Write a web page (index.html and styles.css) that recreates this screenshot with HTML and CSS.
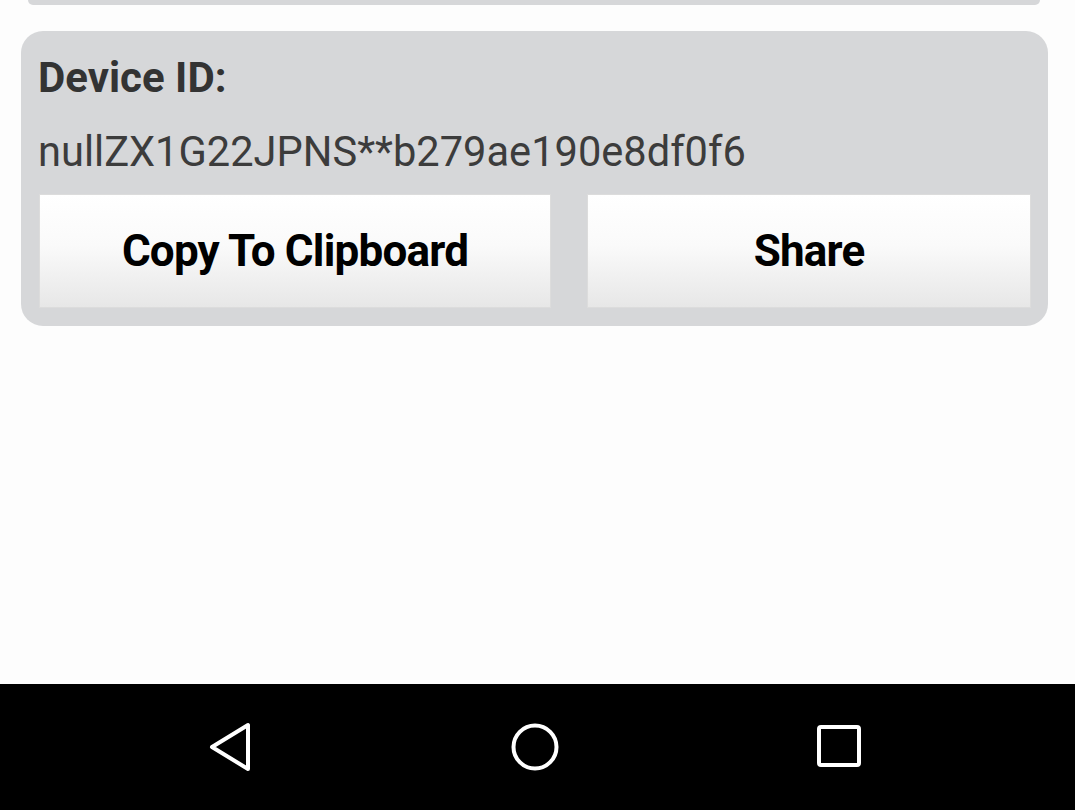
FILE: index.html
```html
<!DOCTYPE html>
<html>
<head>
<meta charset="utf-8">
<link rel="stylesheet" href="styles.css">
</head>
<body>
<div class="screen">
  <div class="prev-card"></div>
  <div class="card">
    <div class="label">Device ID:</div>
    <div class="device-id">nullZX1G22JPNS**b279ae190e8df0f6</div>
    <div class="actions">
      <div class="btn">Copy To Clipboard</div>
      <div class="btn">Share</div>
    </div>
  </div>
  <div class="spacer"></div>
  <div class="navbar">
    <div class="nav-cell">
      <svg width="48" height="52" viewBox="0 0 48 52"><path d="M41 4 L41 48 L5 26 Z" fill="none" stroke="#fff" stroke-width="4" stroke-linejoin="round"/></svg>
    </div>
    <div class="nav-cell">
      <svg width="52" height="52" viewBox="0 0 52 52"><circle cx="26" cy="26" r="21.5" fill="none" stroke="#fff" stroke-width="4"/></svg>
    </div>
    <div class="nav-cell">
      <svg width="48" height="48" viewBox="0 0 48 48"><rect x="4" y="4" width="40" height="38" rx="2" fill="none" stroke="#fff" stroke-width="4"/></svg>
    </div>
  </div>
</div>
</body>
</html>
```
FILE: styles.css
```css
html, body {
  margin: 0;
  padding: 0;
  background: #fdfdfd;
}
.screen {
  width: 1075px;
  height: 810px;
  display: flex;
  flex-direction: column;
  font-family: Roboto, "Liberation Sans", sans-serif;
}
.prev-card {
  height: 5px;
  margin: 0 35px 0 28px;
  background: #d6d7d9;
  border-radius: 0 0 12px 12px;
}
.card {
  margin: 26px 27px 0 21px;
  background: #d6d7d9;
  border-radius: 22px;
  padding: 0 17px 18px 17px;
}
.label {
  font-size: 42px;
  font-weight: bold;
  color: #333;
  line-height: 46px;
  padding-top: 24px;
}
.device-id {
  font-size: 41.6px;
  color: #3c3c3c;
  line-height: 46px;
  padding-top: 28px;
}
.actions {
  margin-top: 19px;
  display: grid;
  grid-template-columns: 512px 444px;
  column-gap: 36px;
  padding-left: 1px;
}
.btn {
  height: 114px;
  box-sizing: border-box;
  border: 1px solid #dcdcdc;
  background: linear-gradient(#ffffff 0%, #fafafa 45%, #e7e7e7 100%);
  display: flex;
  align-items: center;
  justify-content: center;
  font-size: 44px;
  font-weight: bold;
  color: #000;
  letter-spacing: -0.8px;
}
.spacer {
  flex: 1;
}
.navbar {
  height: 126px;
  background: #000;
  display: flex;
  align-items: center;
  padding-left: 79px;
}
.nav-cell {
  width: 304px;
  display: flex;
  justify-content: center;
  align-items: center;
}
.nav-cell svg {
  display: block;
}
```
